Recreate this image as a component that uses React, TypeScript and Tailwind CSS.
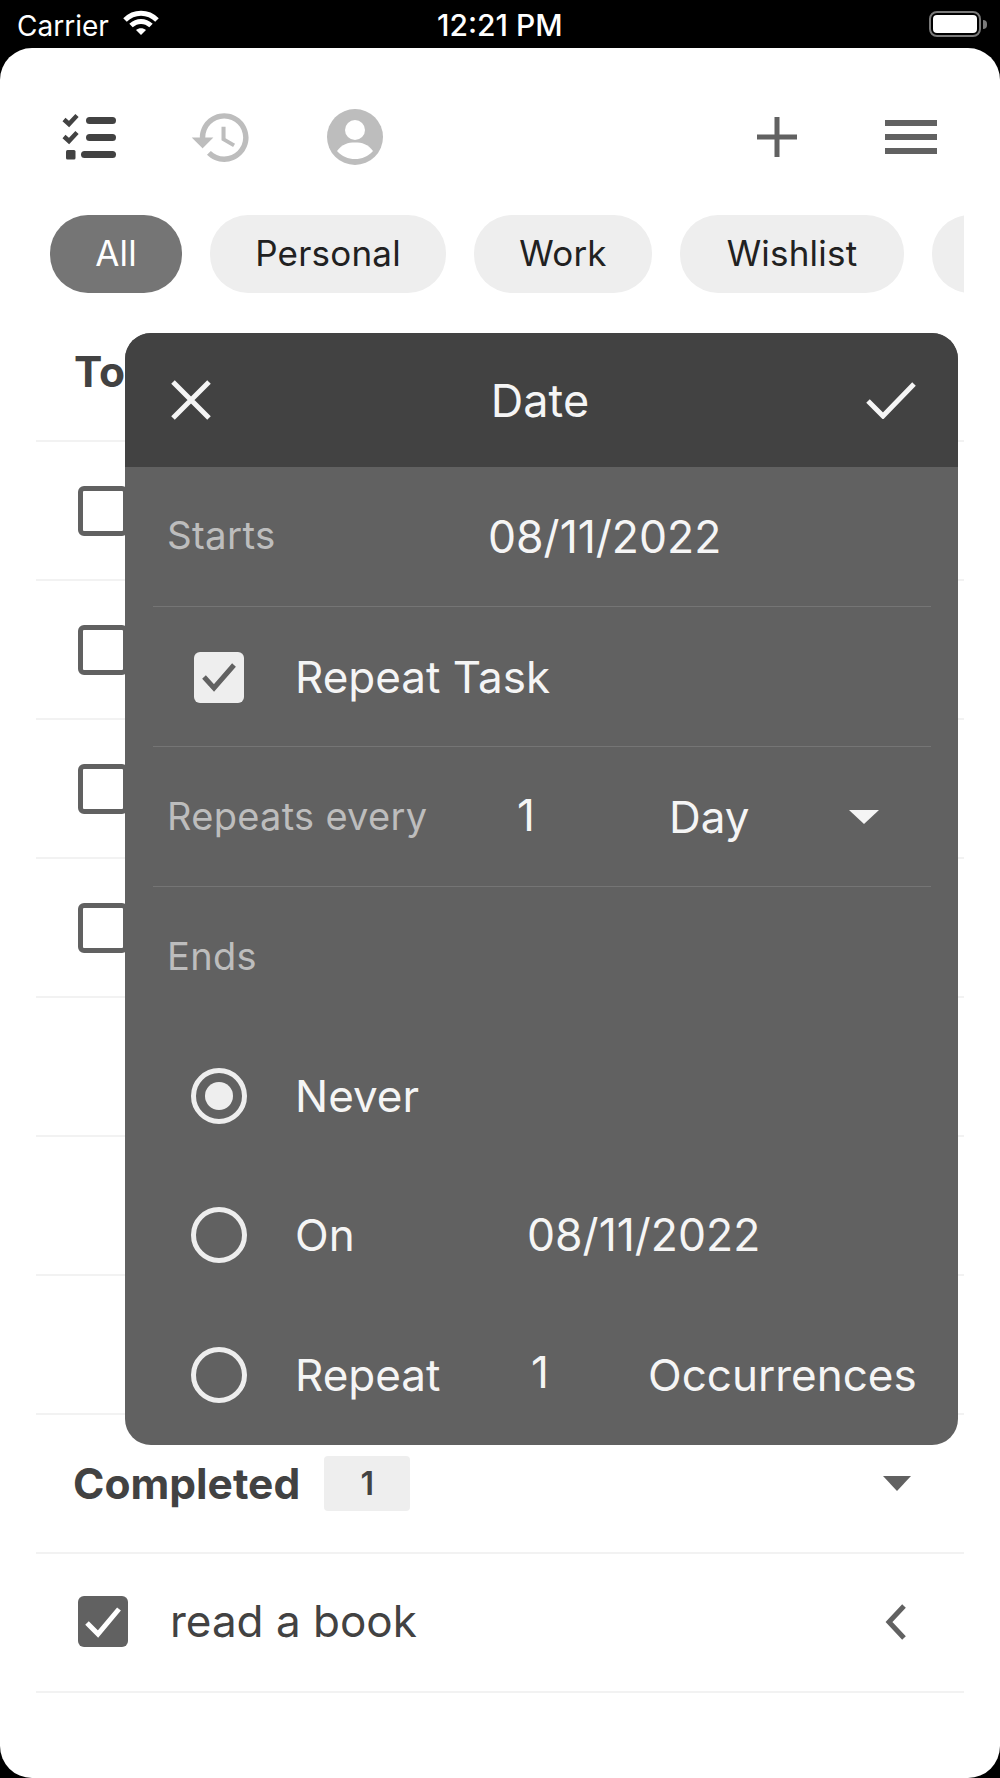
import type { ReactNode } from "react";

function StatusBar() {
  return (
    <div className="relative flex h-12 shrink-0 items-center justify-between pl-[17px] pr-[13px] text-white">
      <div className="flex items-center gap-[14px]">
        <span className="mt-[3px] text-[28px] leading-none">Carrier</span>
        <svg width="36" height="26" viewBox="0 0 36 26" className="-mt-[2px] block">
          <path d="M2 10 C11 1 25 1 34 10" fill="none" stroke="white" strokeWidth="5" />
          <path d="M8 15.5 C14 10 22 10 28 15.5" fill="none" stroke="white" strokeWidth="5" />
          <path d="M13 20 C16 17.5 20 17.5 23 20 L18 25 Z" fill="white" />
        </svg>
      </div>
      <span className="absolute left-[437px] top-[10px] text-[30px] font-medium leading-[30px]">12:21 PM</span>
      <div className="flex items-center gap-[2px]">
        <div className="flex h-[26px] w-[52px] items-center justify-center rounded-[8px] border-2 border-[#7a7a7a]">
          <div className="h-[18px] w-[44px] rounded-[4px] bg-white" />
        </div>
        <div className="h-[9px] w-[4px] rounded-r-full bg-[#7a7a7a]" />
      </div>
    </div>
  );
}

function ChecklistIcon() {
  return (
    <svg width="56" height="48" viewBox="0 0 56 48" className="block">
      <path d="M3 6.5 L8 11 L16 2.5" fill="none" stroke="#424242" strokeWidth="4.5" />
      <path d="M3 23.5 L8 28 L16 19.5" fill="none" stroke="#424242" strokeWidth="4.5" />
      <rect x="5" y="37" width="9.5" height="9.5" rx="1.5" fill="#424242" />
      <rect x="25" y="4" width="30" height="7" rx="3.5" fill="#424242" />
      <rect x="25" y="21" width="30" height="7" rx="3.5" fill="#424242" />
      <rect x="20" y="38" width="35" height="7" rx="3.5" fill="#424242" />
    </svg>
  );
}

function HistoryIcon() {
  return (
    <svg width="65" height="65" viewBox="0 0 24 24" fill="#bdbdbd" className="block">
      <path d="M13 3c-4.97 0-9 4.03-9 9H1l3.89 3.89.07.14L9 12H6c0-3.87 3.13-7 7-7s7 3.13 7 7-3.13 7-7 7c-1.93 0-3.68-.79-4.94-2.06l-1.42 1.42C8.27 19.99 10.51 21 13 21c4.97 0 9-4.03 9-9s-4.03-9-9-9zm-1 5v5l4.28 2.54.72-1.21-3.5-2.08V8H12z" />
    </svg>
  );
}

function ProfileIcon() {
  return (
    <svg width="56" height="56" viewBox="0 0 56 56" className="block">
      <circle cx="28" cy="28" r="28" fill="#bdbdbd" />
      <circle cx="28" cy="21" r="10" fill="white" />
      <path d="M10 42 C15 35 21 33.5 28 33.5 C35 33.5 41 35 46 42 C41 47.5 35 50 28 50 C21 50 15 47.5 10 42 Z" fill="white" />
    </svg>
  );
}

function Header() {
  return (
    <div className="flex h-[167px] shrink-0 items-center pl-[61px] pr-[63px] pt-[11px]">
      <ChecklistIcon />
      <div className="ml-[72px]">
        <HistoryIcon />
      </div>
      <div className="ml-[73px]">
        <ProfileIcon />
      </div>
      <svg width="40" height="40" viewBox="0 0 40 40" className="ml-auto block">
        <path d="M20 0 V40 M0 20 H40" stroke="#616161" strokeWidth="5" />
      </svg>
      <div className="ml-[88px] flex w-[52px] flex-col gap-[8px]">
        <div className="h-[6px] bg-[#616161]" />
        <div className="h-[6px] bg-[#616161]" />
        <div className="h-[6px] bg-[#616161]" />
      </div>
    </div>
  );
}

function Row({ children }: { children?: ReactNode }) {
  return <div className="flex h-[139px] items-center border-b-2 border-[#f2f2f2] px-[42px]">{children}</div>;
}

function EmptyBox() {
  return <div className="h-[50px] w-[50px] rounded-[6px] border-[5px] border-[#616161]" />;
}

function ModalRow({ children, line }: { children: ReactNode; line?: boolean }) {
  return (
    <div className={line ? "relative flex h-[140px] items-center" : "relative flex h-[139px] items-center"}>
      {children}
      {line && <div className="absolute bottom-0 left-[28px] right-[27px] h-px bg-[#757575]" />}
    </div>
  );
}

function Radio({ on }: { on?: boolean }) {
  return (
    <div className="ml-[66px] flex h-[56px] w-[56px] shrink-0 items-center justify-center rounded-full border-[5px] border-[#eeeeee]">
      {on && <div className="h-[28px] w-[28px] rounded-full bg-[#eeeeee]" />}
    </div>
  );
}

function DateModal() {
  return (
    <div className="absolute left-[125px] top-[333px] w-[833px] overflow-hidden rounded-[26px] bg-[#616161]">
      <div className="flex h-[134px] items-center justify-between bg-[#424242] pl-[46px] pr-[42px]">
        <svg width="40" height="40" viewBox="0 0 40 40" className="block">
          <path d="M2 2 L38 38 M38 2 L2 38" stroke="#f5f5f5" strokeWidth="5" />
        </svg>
        <span className="ml-[3px] pt-[2px] text-[45px] text-[#f5f5f5]">Date</span>
        <svg width="50" height="38" viewBox="0 0 50 38" className="block">
          <path d="M2 20 L17 35 L48 3" fill="none" stroke="#f5f5f5" strokeWidth="5" />
        </svg>
      </div>

      <ModalRow line>
        <span className="ml-[42px] w-[321px] pb-[2px] text-[38.5px] tracking-[0.3px] text-[#bdbdbd]">Starts</span>
        <span className="text-[44.5px] text-[#f5f5f5]">08/11/2022</span>
      </ModalRow>

      <ModalRow line>
        <div className="ml-[69px] flex h-[51px] w-[50px] items-center justify-center rounded-[6px] bg-[#eeeeee]">
          <svg width="36" height="30" viewBox="0 0 36 30" className="block">
            <path d="M3 15 L13 26 L33 3" fill="none" stroke="#616161" strokeWidth="5" />
          </svg>
        </div>
        <span className="ml-[51px] text-[44px] text-[#f5f5f5]">Repeat Task</span>
      </ModalRow>

      <ModalRow line>
        <span className="ml-[42px] w-[350px] pb-[2px] text-[38px] tracking-[0.3px] text-[#bdbdbd]">Repeats every</span>
        <span className="w-[152px] pb-[4px] text-[44px] text-[#f5f5f5]">1</span>
        <span className="text-[44px] text-[#f5f5f5]">Day</span>
        <div className="ml-[99px] h-0 w-0 border-x-[15px] border-t-[14px] border-x-transparent border-t-[#f5f5f5]" />
      </ModalRow>

      <ModalRow line={false}>
        <span className="ml-[42px] text-[38px] tracking-[0.3px] text-[#bdbdbd]">Ends</span>
      </ModalRow>

      <ModalRow>
        <Radio on />
        <span className="ml-[48px] text-[44px] text-[#f5f5f5]">Never</span>
      </ModalRow>

      <ModalRow>
        <Radio />
        <span className="ml-[48px] w-[232px] text-[44px] text-[#f5f5f5]">On</span>
        <span className="pt-[2px] text-[44.5px] text-[#f5f5f5]">08/11/2022</span>
      </ModalRow>

      <div className="relative flex h-[141px] items-center">
        <Radio />
        <span className="ml-[48px] w-[236px] text-[44px] text-[#f5f5f5]">Repeat</span>
        <span className="w-[117px] pb-[5px] text-[44px] text-[#f5f5f5]">1</span>
        <span className="text-[44px] text-[#f5f5f5]">Occurrences</span>
      </div>
    </div>
  );
}

export default function App() {
  return (
    <div className="relative flex h-[1778px] w-[1000px] flex-col overflow-hidden bg-black font-['Inter',sans-serif]">
      <StatusBar />
      <div className="flex-1 rounded-[32px] bg-white">
        <Header />

        <div className="ml-[50px] flex w-[914px] gap-[28px] overflow-hidden text-[35px] tracking-[0.2px] text-[#212121]">
          <div className="flex h-[78px] w-[132px] shrink-0 items-center justify-center rounded-[38px] bg-[#757575] pb-[2px] text-white">All</div>
          <div className="flex h-[78px] w-[236px] shrink-0 items-center justify-center rounded-[38px] bg-[#eeeeee] pb-[2px]">Personal</div>
          <div className="flex h-[78px] w-[178px] shrink-0 items-center justify-center rounded-[38px] bg-[#eeeeee] pb-[2px]">Work</div>
          <div className="flex h-[78px] w-[224px] shrink-0 items-center justify-center rounded-[38px] bg-[#eeeeee] pb-[2px]">Wishlist</div>
          <div className="h-[78px] w-[200px] shrink-0 rounded-[38px] bg-[#eeeeee]" />
        </div>

        <div className="mx-[36px] mt-[10px]">
          <div className="flex h-[139px] items-center border-b-2 border-[#f2f2f2] px-[38px]">
            <span className="text-[42.5px] font-bold text-[#424242]">Todo</span>
          </div>
          <Row><EmptyBox /></Row>
          <Row><EmptyBox /></Row>
          <Row><EmptyBox /></Row>
          <Row><EmptyBox /></Row>
          <Row />
          <Row />
          <Row />
          <div className="flex h-[139px] items-center border-b-2 border-[#f2f2f2] pl-[37px] pr-[53px]">
            <span className="text-[42.5px] font-bold text-[#424242]">Completed</span>
            <div className="ml-[24px] flex h-[55px] w-[86px] items-center justify-center rounded-[4px] bg-[#eeeeee] text-[32px] font-semibold text-[#424242]">1</div>
            <div className="ml-auto h-0 w-0 border-x-[14px] border-t-[15px] border-x-transparent border-t-[#616161]" />
          </div>
          <Row>
            <div className="mb-[2px] flex h-[51px] w-[50px] items-center justify-center rounded-[6px] bg-[#616161]">
              <svg width="38" height="32" viewBox="0 0 38 32" className="block">
                <path d="M3 17 L14 28 L35 3" fill="none" stroke="white" strokeWidth="5" />
              </svg>
            </div>
            <span className="mb-[4px] ml-[42px] text-[44px] text-[#424242]">read a book</span>
            <svg width="22" height="36" viewBox="0 0 22 36" className="mb-[2px] ml-auto mr-[15px] block">
              <path d="M19 2 L4 18 L19 34" fill="none" stroke="#616161" strokeWidth="5" />
            </svg>
          </Row>
        </div>
      </div>
      <DateModal />
    </div>
  );
}
